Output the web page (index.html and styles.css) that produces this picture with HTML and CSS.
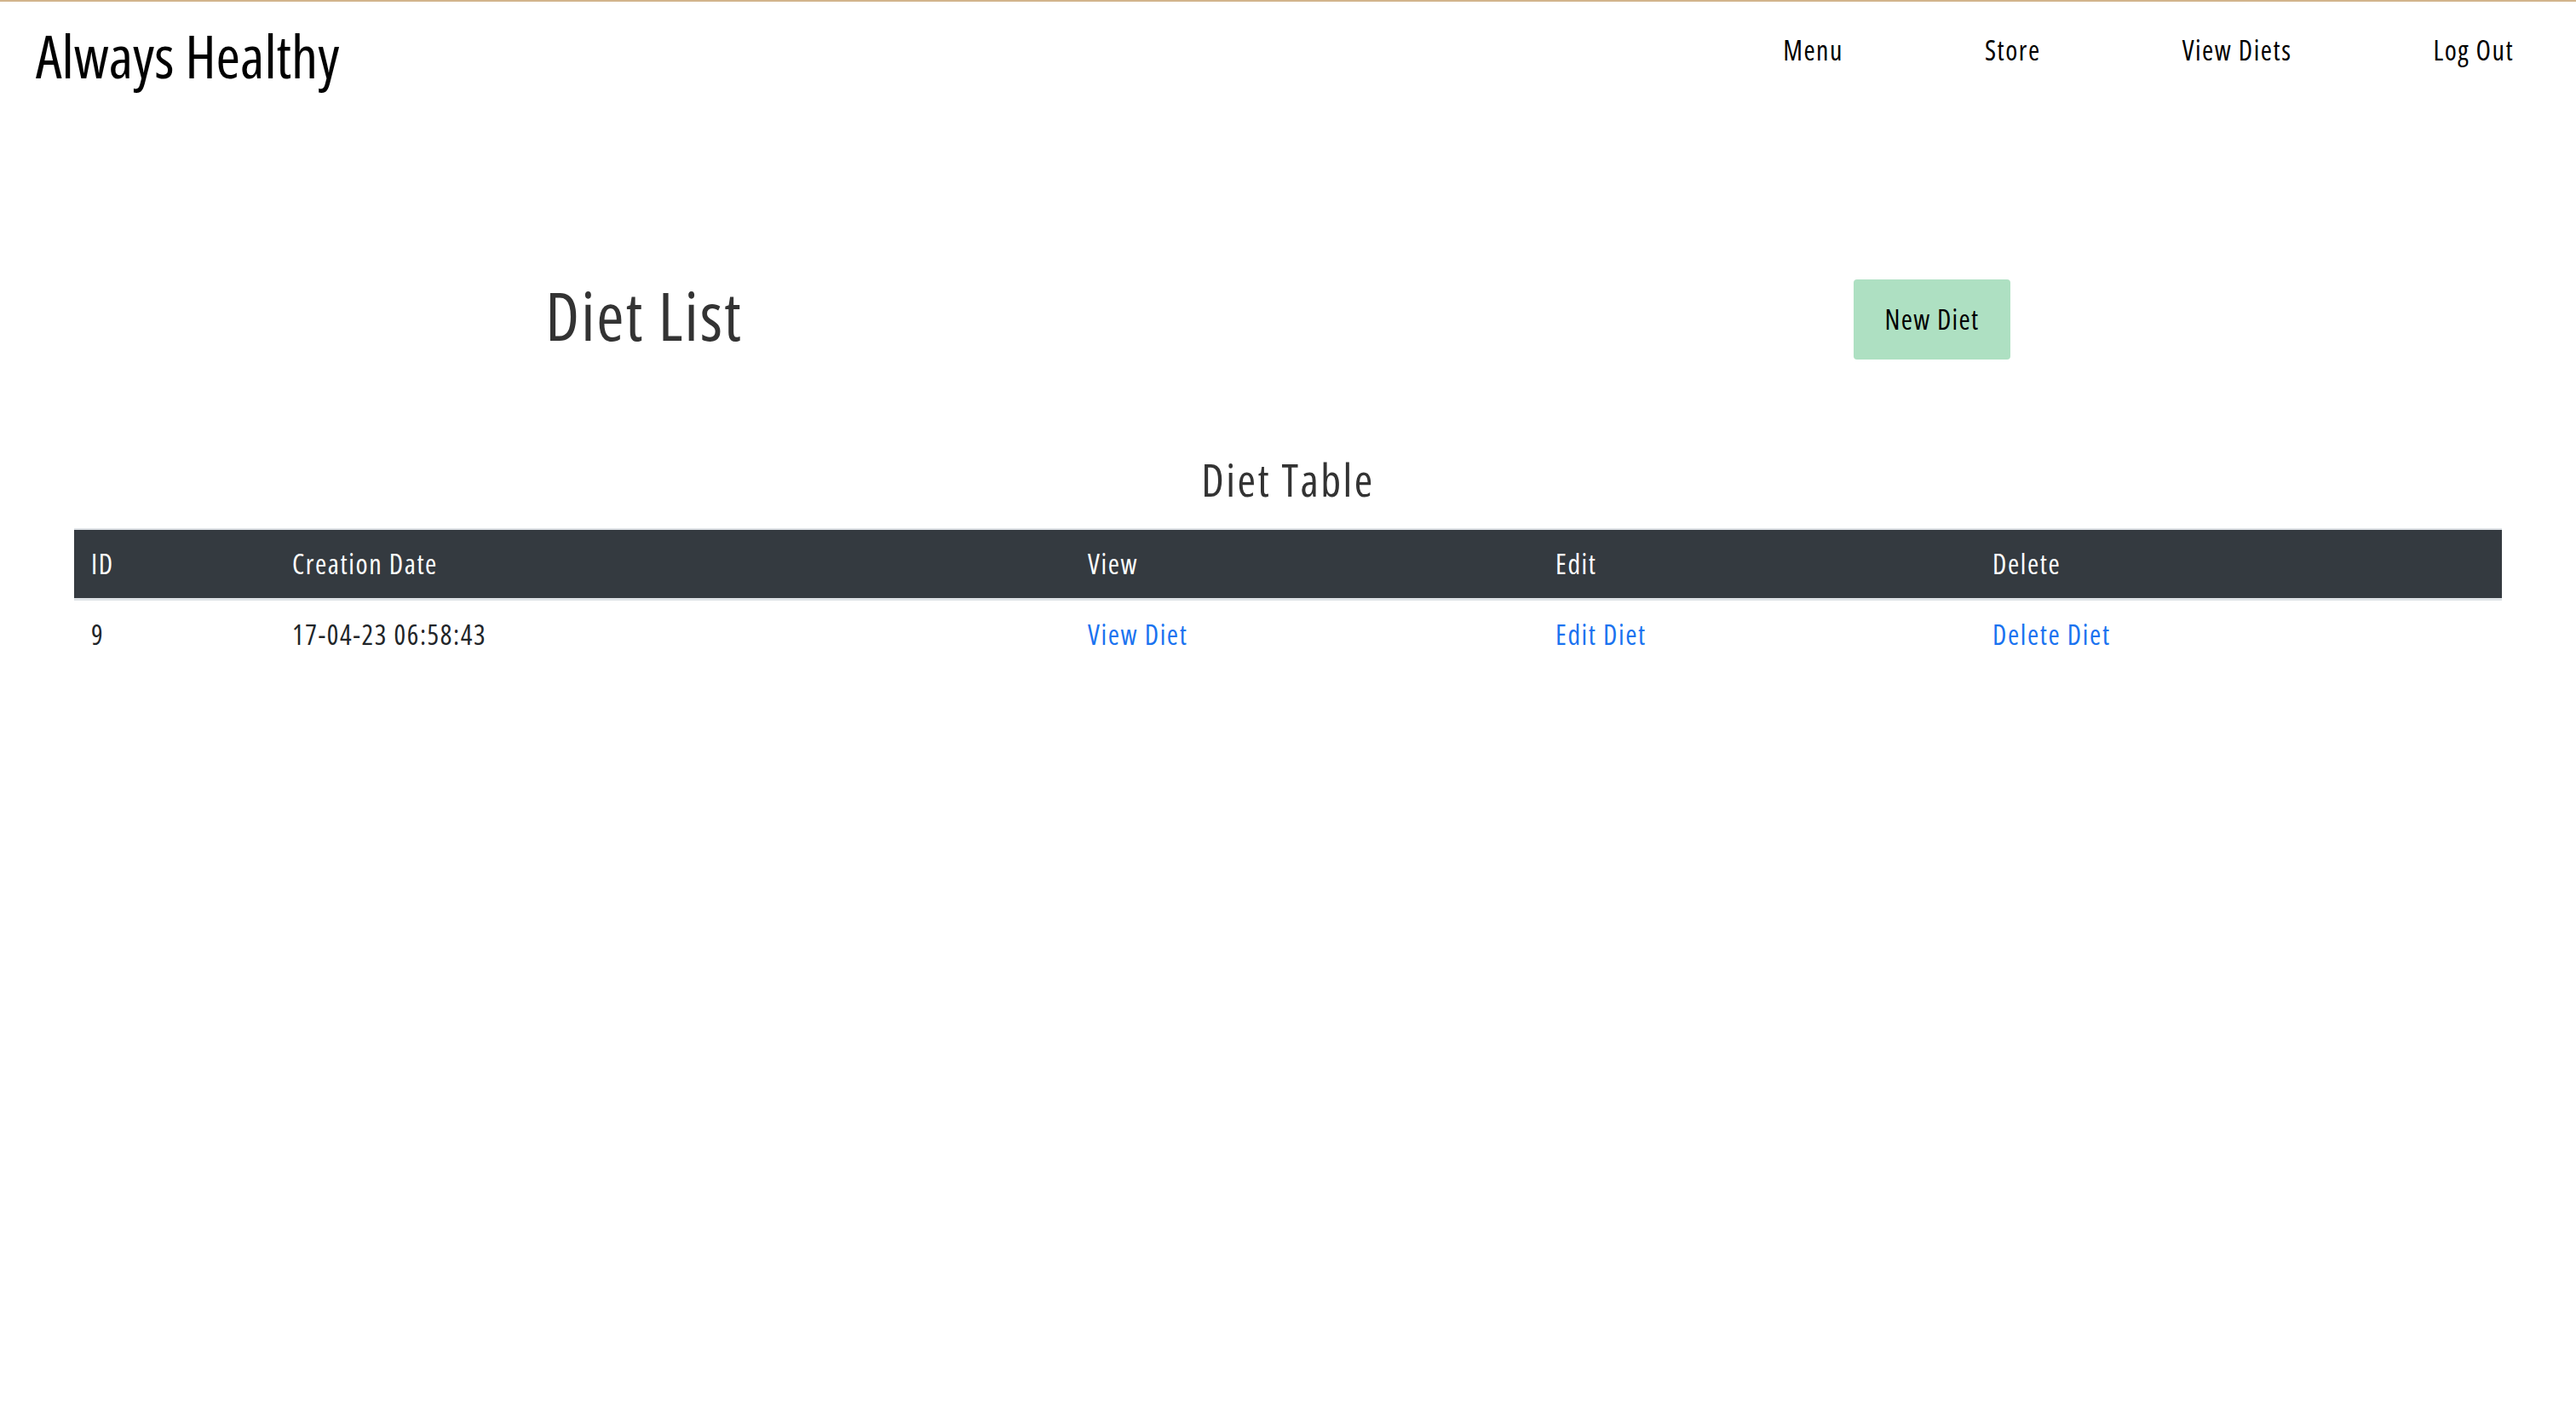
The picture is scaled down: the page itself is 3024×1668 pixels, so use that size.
FILE: index.html
```html
<!DOCTYPE html>
<html lang="en">
<head>
<meta charset="utf-8">
<title>Always Healthy - Diet List</title>
<link rel="stylesheet" href="styles.css">
</head>
<body>
<header class="navbar">
  <a class="brand" href="#">Always Healthy</a>
  <nav class="nav">
    <a class="nav-link" href="#">Menu</a>
    <a class="nav-link" href="#">Store</a>
    <a class="nav-link" href="#">View Diets</a>
    <a class="nav-link" href="#">Log Out</a>
  </nav>
</header>
<main>
  <section class="title-row">
    <div class="col"><h1 class="page-title">Diet List</h1></div>
    <div class="col"><button class="btn-new" type="button">New Diet</button></div>
  </section>
  <h3 class="table-title">Diet Table</h3>
  <table class="diet-table">
    <colgroup>
      <col class="c-id"><col class="c-date"><col class="c-view"><col class="c-edit"><col class="c-del">
    </colgroup>
    <thead>
      <tr><th>ID</th><th>Creation Date</th><th>View</th><th>Edit</th><th>Delete</th></tr>
    </thead>
    <tbody>
      <tr>
        <td>9</td>
        <td>17-04-23 06:58:43</td>
        <td><a class="link" href="#">View Diet</a></td>
        <td><a class="link" href="#">Edit Diet</a></td>
        <td><a class="link" href="#">Delete Diet</a></td>
      </tr>
    </tbody>
  </table>
</main>
</body>
</html>
```
FILE: styles.css
```css
* { box-sizing: border-box; }
html, body { margin: 0; padding: 0; background: #fff; }
body {
  font-family: "Open Sans", "Roboto", sans-serif;
  font-stretch: 75%;
  font-size: 32px;
  line-height: 1.5;
  color: #212529;
  border-top: 2px solid #d2b48c;
}
a { text-decoration: none; }

.navbar {
  display: flex;
  justify-content: space-between;
  align-items: flex-start;
  padding: 17px 73px 0 42px;
}
.brand {
  color: #000;
  font-size: 69px;
  line-height: 92px;
}
.nav {
  display: flex;
  gap: 166px;
  margin-top: 16px;
}
.nav-link {
  color: #000;
  font-size: 32px;
  letter-spacing: 1.5px;
  line-height: 48px;
}

.title-row {
  display: flex;
  align-items: center;
  margin-top: 207px;
}
.col {
  flex: 1 1 0;
  display: flex;
  justify-content: center;
  align-items: center;
}
.page-title {
  margin: 0;
  font-weight: 400;
  font-size: 78px;
  letter-spacing: 2px;
  line-height: 96px;
  color: #333;
}
.btn-new {
  font-family: inherit;
  font-stretch: 75%;
  font-size: 32px;
  letter-spacing: 1.3px;
  line-height: 48px;
  color: #000;
  background: #aee0c2;
  border: 0;
  border-radius: 4px;
  width: 184px;
  height: 94px;
  padding: 0;
  margin-top: 10px;
}

.table-title {
  margin: 107px 0 24px;
  text-align: center;
  font-weight: 400;
  font-size: 52px;
  letter-spacing: 2.5px;
  line-height: 67px;
  color: #333;
}

.diet-table {
  margin: 0 87px;
  width: 2850px;
  border-collapse: collapse;
  table-layout: fixed;
}
.c-id { width: 236px; }
.c-date { width: 934px; }
.c-view { width: 549px; }
.c-edit { width: 513px; }
.c-del { width: 618px; }
.diet-table th,
.diet-table td {
  text-align: left;
  padding: 16px 20px;
  font-size: 32px;
  letter-spacing: 1.6px;
  line-height: 48px;
}
.diet-table thead th {
  background: #343a40;
  color: #fff;
  font-weight: 500;
  border-top: 2px solid #dee2e6;
  border-bottom: 3px solid #dee2e6;
}
.diet-table td { color: #212529; }
.link { color: #1a73f0; }
```
